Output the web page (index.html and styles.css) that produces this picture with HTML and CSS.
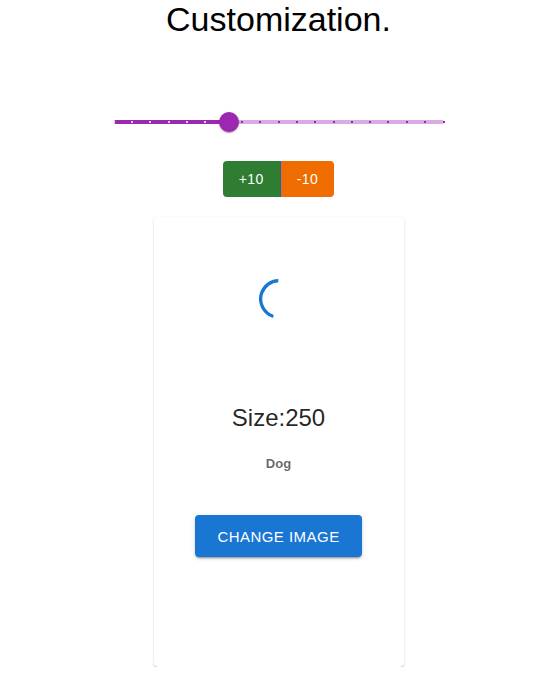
FILE: index.html
```html
<!DOCTYPE html>
<html>
<head>
<meta charset="utf-8">
<link rel="stylesheet" href="styles.css">
</head>
<body>
<div class="page">
  <h1 class="title">Customization.</h1>

  <div class="slider">
    <span class="rail"></span>
    <span class="track" style="width:34.85%"></span>
    <span class="mark active" style="left:0%"></span>
    <span class="mark active" style="left:5.556%"></span>
    <span class="mark active" style="left:11.111%"></span>
    <span class="mark active" style="left:16.667%"></span>
    <span class="mark active" style="left:22.222%"></span>
    <span class="mark active" style="left:27.778%"></span>
    <span class="mark active" style="left:33.333%"></span>
    <span class="mark" style="left:38.889%"></span>
    <span class="mark" style="left:44.444%"></span>
    <span class="mark" style="left:50%"></span>
    <span class="mark" style="left:55.556%"></span>
    <span class="mark" style="left:61.111%"></span>
    <span class="mark" style="left:66.667%"></span>
    <span class="mark" style="left:72.222%"></span>
    <span class="mark" style="left:77.778%"></span>
    <span class="mark" style="left:83.333%"></span>
    <span class="mark" style="left:88.889%"></span>
    <span class="mark" style="left:94.444%"></span>
    <span class="mark" style="left:100%"></span>
    <span class="thumb" style="left:34.85%"></span>
  </div>

  <div class="group">
    <button class="gbtn plus">+10</button>
    <button class="gbtn minus">-10</button>
  </div>

  <div class="card">
    <div class="media">
      <svg class="spinner" width="40" height="40" viewBox="22 22 44 44">
        <circle cx="44" cy="44" r="20.2" fill="none" stroke="#1976d2" stroke-width="3.6" stroke-dasharray="56 200" transform="rotate(108 44 44)"></circle>
      </svg>
    </div>
    <div class="size">Size:250</div>
    <div class="label">Dog</div>
    <button class="change">CHANGE IMAGE</button>
  </div>
</div>
</body>
</html>
```

FILE: styles.css
```css
* { box-sizing: border-box; }

body {
  margin: 0;
  background: #fff;
  font-family: "Liberation Sans", Arial, sans-serif;
}

.page {
  padding-left: 22px;
  display: flex;
  flex-direction: column;
  align-items: center;
}

.title {
  margin: 0;
  font-size: 34px;
  line-height: 38px;
  font-weight: normal;
  color: #000;
  text-align: center;
}

.slider {
  position: relative;
  width: 330px;
  height: 20px;
  margin-top: 74px;
}

.rail {
  position: absolute;
  left: 0;
  right: 0;
  top: 8px;
  height: 4px;
  border-radius: 2px;
  background: #9c27b0;
  opacity: 0.38;
}

.track {
  position: absolute;
  left: 0;
  top: 8px;
  height: 4px;
  border-radius: 2px;
  background: #9c27b0;
}

.mark {
  position: absolute;
  top: 9px;
  width: 2px;
  height: 2px;
  margin-left: -1px;
  background: #9c27b0;
}

.mark.active {
  background: #fff;
  opacity: 0.8;
}

.thumb {
  position: absolute;
  top: 0;
  width: 20px;
  height: 20px;
  margin-left: -10px;
  border-radius: 50%;
  background: #9c27b0;
  box-shadow: 0 2px 1px -1px rgba(0,0,0,0.2), 0 1px 1px 0 rgba(0,0,0,0.14), 0 1px 3px 0 rgba(0,0,0,0.12);
}

.group {
  display: flex;
  margin-top: 29px;
  border-radius: 4px;
}

.gbtn {
  border: none;
  height: 36px;
  padding: 0 16px;
  font-family: "Liberation Sans", Arial, sans-serif;
  font-size: 14px;
  letter-spacing: 0.4px;
  color: #fff;
  cursor: pointer;
}

.plus {
  background: #2e7d32;
  border-radius: 4px 0 0 4px;
  border-right: 1px solid #1565c0;
}

.minus {
  background: #ef6c00;
  border-radius: 0 4px 4px 0;
}

.card {
  width: 250px;
  height: 450px;
  margin-top: 20px;
  border-radius: 4px;
  background: #fff;
  box-shadow: 0 2px 1px -1px rgba(0,0,0,0.25), 0 1px 1px 0 rgba(0,0,0,0.14), 0 1px 3px 0 rgba(0,0,0,0.12);
  display: flex;
  flex-direction: column;
  align-items: center;
}

.media {
  width: 100%;
  height: 164px;
  display: flex;
  align-items: center;
  justify-content: center;
}

.spinner { display: block; }

.size {
  margin-top: 23px;
  font-size: 24px;
  line-height: 28px;
  color: rgba(0,0,0,0.87);
}

.label {
  margin-top: 24px;
  font-size: 13px;
  line-height: 15px;
  font-weight: bold;
  color: rgba(0,0,0,0.6);
}

.change {
  margin-top: 44px;
  height: 42px;
  padding: 0 22px;
  border: none;
  border-radius: 4px;
  background: #1976d2;
  color: #fff;
  font-family: "Liberation Sans", Arial, sans-serif;
  font-size: 15px;
  letter-spacing: 0.46px;
  cursor: pointer;
  box-shadow: 0 3px 1px -2px rgba(0,0,0,0.2), 0 2px 2px 0 rgba(0,0,0,0.14), 0 1px 5px 0 rgba(0,0,0,0.12);
}
```
